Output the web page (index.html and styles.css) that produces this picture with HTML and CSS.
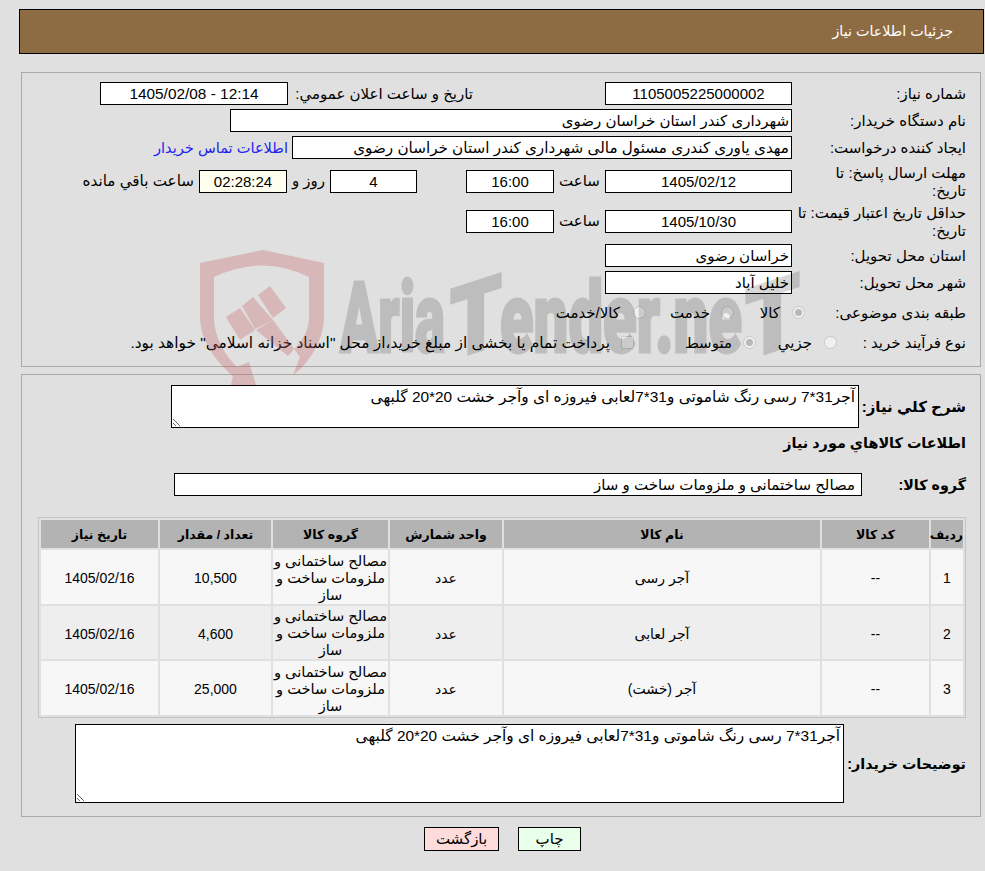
FILE: index.html
```html
<!DOCTYPE html>
<html lang="fa" dir="rtl">
<head>
<meta charset="utf-8">
<title>جزئیات اطلاعات نیاز</title>
<link rel="stylesheet" href="styles.css">
</head>
<body>
<div class="page">
  <header class="title-bar">جزئیات اطلاعات نیاز</header>

  <section class="panel panel-info">
    <div class="row">
      <div class="label">شماره نیاز:</div>
      <div class="field w-date center">1105005225000002</div>
      <div class="label-inline announce">تاریخ و ساعت اعلان عمومي:</div>
      <div class="field w-announce center"><bdi dir="ltr">1405/02/08 - 12:14</bdi></div>
    </div>
    <div class="row">
      <div class="label">نام دستگاه خریدار:</div>
      <div class="field w-buyer">شهرداری کندر استان خراسان رضوی</div>
    </div>
    <div class="row">
      <div class="label">ایجاد کننده درخواست:</div>
      <div class="field w-creator">مهدی یاوری کندری مسئول مالی شهرداری کندر استان خراسان رضوی</div>
      <a class="contact" href="#">اطلاعات تماس خریدار</a>
    </div>
    <div class="row tall">
      <div class="label">مهلت ارسال پاسخ: تا<br>تاریخ:</div>
      <div class="field w-date center">1405/02/12</div>
      <div class="label-inline hour">ساعت</div>
      <div class="field w-time center">16:00</div>
      <div class="field w-days center">4</div>
      <div class="label-inline days">روز و</div>
      <div class="field w-time count center">02:28:24</div>
      <div class="label-inline left">ساعت باقي مانده</div>
    </div>
    <div class="row tall tall-last">
      <div class="label">حداقل تاریخ اعتبار قیمت: تا تاریخ:</div>
      <div class="field w-date center">1405/10/30</div>
      <div class="label-inline hour">ساعت</div>
      <div class="field w-time center">16:00</div>
    </div>
    <div class="row">
      <div class="label">استان محل تحویل:</div>
      <div class="field w-date">خراسان رضوی</div>
    </div>
    <div class="row">
      <div class="label">شهر محل تحویل:</div>
      <div class="field w-date">خلیل آباد</div>
    </div>
    <div class="row choices first-choices">
      <div class="label l-subject">طبقه بندی موضوعی:</div>
      <span class="radio on"></span><span class="opt o-kala">کالا</span>
      <span class="radio"></span><span class="opt o-khedmat">خدمت</span>
      <span class="radio"></span><span class="opt o-both">کالا/خدمت</span>
    </div>
    <div class="row choices">
      <div class="label l-process">نوع فرآیند خرید :</div>
      <span class="radio"></span><span class="opt o-jozi">جزيي</span>
      <span class="radio on"></span><span class="opt o-mid">متوسط</span>
      <span class="check"></span><span class="opt o-pay">پرداخت تمام یا بخشی از مبلغ خرید،از محل "اسناد خزانه اسلامی" خواهد بود.</span>
    </div>
  </section>

  <section class="panel panel-items">
    <div class="row desc-row">
      <div class="label-bold desc-label">شرح كلي نياز:</div>
      <textarea class="area area-small" readonly>آجر31*7 رسی رنگ شاموتی و31*7لعابی فیروزه ای وآجر خشت 20*20 گلبهی</textarea>
    </div>
    <h2 class="section-heading">اطلاعات كالاهاي مورد نياز</h2>
    <div class="row group-row">
      <div class="label-bold group-label">گروه کالا:</div>
      <div class="field w-group">مصالح ساختمانی و ملزومات ساخت و ساز</div>
    </div>
    <table class="items">
      <thead>
        <tr>
          <th class="c-idx">ردیف</th>
          <th class="c-code">کد کالا</th>
          <th class="c-name">نام کالا</th>
          <th class="c-unit">واحد شمارش</th>
          <th class="c-group">گروه کالا</th>
          <th class="c-qty">تعداد / مقدار</th>
          <th class="c-date">تاریخ نیاز</th>
        </tr>
      </thead>
      <tbody>
        <tr>
          <td>1</td><td>--</td><td>آجر رسی</td><td>عدد</td>
          <td class="group-cell">مصالح ساختمانی و ملزومات ساخت و ساز</td>
          <td>10,500</td><td>1405/02/16</td>
        </tr>
        <tr>
          <td>2</td><td>--</td><td>آجر لعابی</td><td>عدد</td>
          <td class="group-cell">مصالح ساختمانی و ملزومات ساخت و ساز</td>
          <td>4,600</td><td>1405/02/16</td>
        </tr>
        <tr>
          <td>3</td><td>--</td><td>آجر (خشت)</td><td>عدد</td>
          <td class="group-cell">مصالح ساختمانی و ملزومات ساخت و ساز</td>
          <td>25,000</td><td>1405/02/16</td>
        </tr>
      </tbody>
    </table>
    <div class="row note-row">
      <div class="label-bold note-label">توضیحات خریدار:</div>
      <textarea class="area area-large" readonly>آجر31*7 رسی رنگ شاموتی و31*7لعابی فیروزه ای وآجر خشت 20*20 گلبهی</textarea>
    </div>
  </section>

  <div class="actions">
    <button class="btn btn-print" type="button">چاپ</button>
    <button class="btn btn-back" type="button">بازگشت</button>
  </div>

  <svg class="watermark" width="610" height="145" viewBox="0 0 610 145" aria-hidden="true">
    <g class="wm-red">
      <path d="M10 23 L73 10 L134 23 L134 77 C134 100 118 125 103 135 L110 117 L83 80 L66 90 L98 116 C108 105 119 95 119 77 L119 37 Q73 14 24 37 L24 77 C24 98 36 116 47 127 L59 122 L66 145 L41 145 L43 136 C26 122 10 100 10 77 Z"/>
      <path d="M36 77 L50 68 L65 90 L50 100 Z"/>
      <path d="M52 66 L63 57 L83 80 L65 89 Z"/>
      <path d="M68 55 L80 46 L96 68 L83 78 Z"/>
    </g>
    <g class="wm-gray">
      <text class="wm-text" x="150" y="112" textLength="105" lengthAdjust="spacingAndGlyphs">Aria</text>
      <text class="wm-text" transform="translate(260 120) skewY(-18)" textLength="52" lengthAdjust="spacingAndGlyphs">T</text>
      <text class="wm-text" x="310" y="112" textLength="242" lengthAdjust="spacingAndGlyphs">ender.ne</text>
      <text class="wm-text" transform="translate(555 120) skewY(-18)" textLength="55" lengthAdjust="spacingAndGlyphs">T</text>
    </g>
  </svg>
</div>
</body>
</html>
```
FILE: styles.css
```css
* { box-sizing: border-box; }
html, body { margin: 0; padding: 0; }
body {
  background: #e0e0e0;
  color: #000;
  font-family: "Liberation Sans", "DejaVu Sans", sans-serif;
  font-size: 15px;
  height: 871px;
  overflow: hidden;
}
.page { position: relative; padding: 9px 1px 0 19px; }
.title-bar {
  height: 45px;
  line-height: 43px;
  background: #8d6c43;
  border: 1px solid #000;
  color: #fff;
  padding-right: 30px;
  font-size: 14.3px;
}
.panel {
  margin: 0 3px 0 2px;
  border: 1px solid #a9a9a9;
  padding-right: 14px;
}
.panel-info { margin-top: 18px; height: 295px; padding-top: 9px; }
.panel-items { margin-top: 7px; height: 443px; padding-top: 10px; }
.row { display: flex; align-items: center; min-height: 23px; margin-bottom: 4px; }
.row.tall { height: 36px; }
.row.tall .label { padding-top: 2px; }
.row.tall-last { margin-bottom: 5px; }
.label { width: 174px; flex: none; line-height: 18px; padding-left: 4px; }
.label-inline { flex: none; white-space: nowrap; }
.announce { margin-right: 132px; width: 185px; }
.hour { width: 51px; text-align: center; }
.days { width: 43px; text-align: center; }
.left { margin-right: 5px; font-size: 15.2px; }
.field {
  height: 23px;
  line-height: 21px;
  flex: none;
  background: #fff;
  border: 1px solid #000;
  padding: 0 2px;
  white-space: nowrap;
  overflow: hidden;
}
.center { text-align: center; }
.w-date { width: 187px; }
.w-announce { width: 188px; font-size: 15.4px; }
.w-buyer { width: 562px; }
.w-creator { width: 500px; font-size: 15.2px; }
.w-time { width: 88px; }
.w-days { width: 87px; margin-right: 49px; }
.count { background: #fffff0; }
.w-group { width: 688px; padding-right: 6px; }
.contact { margin-right: 4px; color: #2222ee; text-decoration: none; white-space: nowrap; font-size: 14.6px; }
.choices { height: 22px; min-height: 22px; margin-bottom: 8px; }
.first-choices { margin-top: 8px; }
.l-subject { width: 161px; }
.l-process { width: 129px; }
.radio {
  flex: none;
  width: 13px;
  height: 13px;
  margin-top: -2px;
  border-radius: 50%;
  background: #f0f0f0;
  border: 1px solid #c8c8c8;
  position: relative;
}
.radio.on::after {
  content: "";
  position: absolute;
  inset: 2px;
  border-radius: 50%;
  background: #b8b8b8;
}
.check {
  flex: none;
  width: 13px;
  height: 13px;
  margin-top: -2px;
  background: #f0f0f0;
  border: 1px solid #c8c8c8;
  border-radius: 2px;
}
.opt { flex: none; padding-right: 12px; white-space: nowrap; }
.o-kala { width: 58px; }
.o-khedmat { width: 75px; padding-right: 11px; }
.o-both { padding-right: 13px; }
.o-jozi { width: 68px; }
.o-mid { width: 109px; padding-right: 11px; }
.o-pay { padding-right: 11px; font-size: 15.4px; }
.label-bold { flex: none; font-weight: bold; white-space: nowrap; font-size: 14.3px; }
.desc-label { width: 107px; font-size: 15px; }
.desc-row { margin-bottom: 4px; }
.section-heading { font-size: 14.4px; font-weight: bold; margin: 0; height: 22px; line-height: 22px; }
.group-row { margin-top: 19px; margin-bottom: 21px; }
.group-label { width: 104px; }
.note-label { width: 122px; }
.area {
  flex: none;
  display: block;
  background: #fff;
  border: 1px solid #000;
  font: inherit;
  font-size: 15.4px;
  color: #000;
  padding: 2px 3px;
  margin: 0;
  resize: both;
  outline: none;
  overflow: hidden;
}
.area-small { width: 688px; height: 43px; }
.area-large { width: 769px; height: 79px; }
.items {
  width: 928px;
  border: 1px solid #c4c4c4;
  border-spacing: 2px;
  border-collapse: separate;
  table-layout: fixed;
  text-align: center;
  font-size: 14px;
}
.items th { background: #b3b3b3; height: 28px; padding: 0; font-size: 12.5px; }
.items td { background: #f7f7f7; height: 54px; padding: 2px 1px 0; }
.items tbody tr:nth-child(even) td { background: #eeeeee; height: 53px; }
.items .group-cell { line-height: 17px; padding: 2px 0 0; font-size: 14.6px; }
.c-idx { width: 32px; }
.c-code { width: 107px; }
.c-name { width: 316px; }
.c-unit { width: 112px; }
.c-group { width: 115px; }
.c-qty { width: 111px; }
.c-date { width: 117px; }
.note-row { margin-top: 6px; }
.actions { display: flex; justify-content: center; gap: 19px; margin-top: 10px; padding-left: 4px; padding-right: 2px; }
.btn {
  height: 24px;
  border: 1px solid #000;
  color: #000;
  font: inherit;
  padding: 0;
}
.btn-print { width: 63px; background: #e9ffe9; }
.btn-back { width: 75px; background: #ffdcdc; }
.watermark { position: absolute; left: 190px; top: 240px; pointer-events: none; direction: ltr; }
.wm-red { fill: rgb(197, 90, 90); opacity: 0.3; }
.wm-gray { fill: #000; stroke: #000; stroke-width: 3px; opacity: 0.15; }
.wm-text { font-family: "Roboto", sans-serif; font-weight: 900; font-size: 98px; }
```
